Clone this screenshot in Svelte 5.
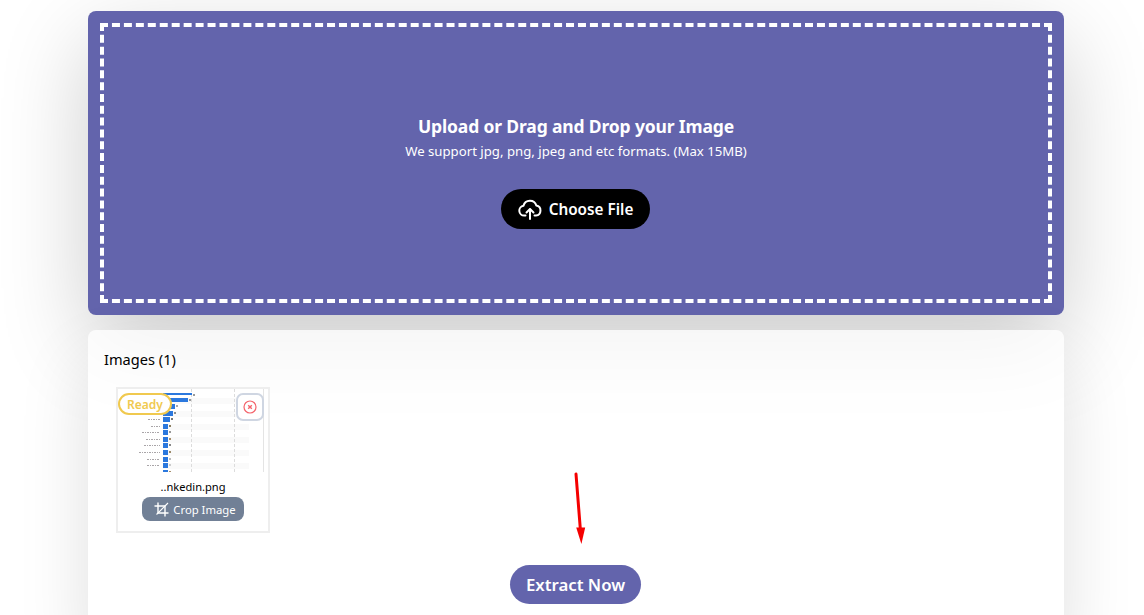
<script lang="ts">
  // thumbnail rows: bar end x, label width, band
  const rows = [
    { y: 393, end: 192, label: 0, band: false, h: 2, tint: "#9a9a9a" },
    { y: 398, end: 188, label: 0, band: true, h: 4, tint: "#9a9a9a" },
    { y: 404, end: 175, label: 0, band: false, h: 5, tint: "#a8a8a8" },
    { y: 411, end: 173, label: 0, band: true, h: 5, tint: "#8f8f8f" },
    { y: 417, end: 170, label: 12, band: false, h: 5, tint: "#777" },
    { y: 424, end: 168, label: 9, band: true, h: 5, tint: "#8b7d60" },
    { y: 430, end: 168, label: 18, band: false, h: 5, tint: "#999" },
    { y: 437, end: 168, label: 14, band: true, h: 5, tint: "#a58e6c" },
    { y: 443, end: 168, label: 16, band: false, h: 5, tint: "#888" },
    { y: 450, end: 168, label: 21, band: true, h: 5, tint: "#9c8a6a" },
    { y: 457, end: 168, label: 13, band: false, h: 5, tint: "#bbb" },
    { y: 463, end: 168, label: 13, band: true, h: 5, tint: "#ccc" },
    { y: 470, end: 168, label: 20, band: false, h: 2, tint: "#a58e6c" }
  ];
</script>

<main class="page">
  <section class="upload">
    <div class="dashed">
      <h2>Upload or Drag and Drop your Image</h2>
      <p>We support jpg, png, jpeg and etc formats. (Max 15MB)</p>
      <button class="choose">
        <svg width="24" height="24" viewBox="0 0 24 24" fill="none" stroke="#fff" stroke-width="2" stroke-linecap="round" stroke-linejoin="round">
          <path d="M7.5 18.5H6.2a4.9 4.9 0 0 1-.7-9.75A6.6 6.6 0 0 1 18.3 8.6a5 5 0 0 1-.3 9.9h-1.5" />
          <path d="M12 22v-9.5" />
          <path d="M8.5 15.5l3.5-3.5 3.5 3.5" />
        </svg>
        Choose File
      </button>
    </div>
  </section>

  <section class="images">
    <div class="heading">Images (1)</div>
    <div class="thumb">
      <div class="preview">
        <svg width="150" height="83" viewBox="118 389 150 83">
          {#each rows as r}
            {#if r.band}
              <rect x="163" y={r.y} width="86" height="6" fill="#fafafa" />
            {/if}
          {/each}
          <line x1="191.5" y1="389" x2="191.5" y2="472" stroke="#dcdcdc" stroke-dasharray="3 2" />
          <line x1="234.5" y1="389" x2="234.5" y2="472" stroke="#dcdcdc" stroke-dasharray="3 2" />
          <line x1="263.5" y1="389" x2="263.5" y2="472" stroke="#e4e4e4" />
          {#each rows as r}
            <rect x="163" y={r.y} width={r.end - 163} height={r.h} fill="#2b78de" />
            <rect x={r.end + 1} y={r.y + 1} width="2" height="2" fill={r.tint} />
            {#if r.label}
              <line x1={160 - r.label} y1={r.y + 2.5} x2="160" y2={r.y + 2.5} stroke="#a9a5a8" stroke-dasharray="2 1 1 1" />
            {/if}
          {/each}
        </svg>
        <span class="badge">Ready</span>
        <button class="remove" aria-label="Remove">
          <svg width="14" height="14" viewBox="0 0 14 14" fill="none" stroke="#f4636b" stroke-width="1.2">
            <circle cx="7" cy="7" r="6" />
            <path d="M5.2 5.2l3.6 3.6M8.8 5.2L5.2 8.8" stroke-width="1.4" />
          </svg>
        </button>
      </div>
      <div class="name">..nkedin.png</div>
      <button class="crop">
        <svg width="15" height="15" viewBox="0 0 15 15" fill="none" stroke="#fff" stroke-width="1.4">
          <path d="M4 0.5v10.5h10.5" />
          <path d="M0.5 4h10.5v10.5" />
          <path d="M14 1l-11.5 11.5" stroke-width="1.1" />
        </svg>
        Crop Image
      </button>
    </div>
    <div class="actions">
      <button class="extract">Extract Now</button>
    </div>
    <svg class="arrow" width="14" height="74" viewBox="0 0 14 74">
      <path d="M2 2l4.4 56" stroke="#f50000" stroke-width="3" stroke-linecap="round" fill="none" />
      <path d="M2.2 55.5h9L7.4 72z" fill="#f50000" />
    </svg>
  </section>
</main>

<style>
  :global(body) {
    margin: 0;
    background: #fff;
    overflow: hidden;
    height: 615px;
  }
  .page {
    width: 976px;
    margin-left: 88px;
    padding-top: 11px;
    font-family: "Noto Sans", "Open Sans", sans-serif;
    color: #000;
  }
  button {
    font-family: inherit;
    border: 0;
    cursor: pointer;
  }
  .upload {
    position: relative;
    height: 304px;
    box-sizing: border-box;
    padding: 12px;
    background: #6364ac;
    border-radius: 8px;
    box-shadow: 0 30px 90px rgba(0, 0, 0, 0.2);
  }
  .dashed {
    height: 100%;
    box-sizing: border-box;
    border: 4px dashed #fff;
    display: flex;
    flex-direction: column;
    align-items: center;
    color: #fff;
  }
  h2 {
    margin: 87px 0 0;
    font-size: 17.5px;
    line-height: 24px;
    font-weight: 700;
    letter-spacing: -0.15px;
  }
  p {
    margin: 3px 0 0;
    font-size: 13.2px;
    line-height: 20px;
  }
  .choose {
    margin: 28px 1px 0 0;
    width: 149px;
    height: 40px;
    border-radius: 20px;
    background: #000;
    color: #fff;
    font-size: 15.3px;
    font-weight: 600;
    display: flex;
    align-items: center;
    justify-content: center;
    gap: 7px;
    padding: 0;
  }
  .images {
    position: relative;
    margin-top: 15px;
    height: 300px;
    box-sizing: border-box;
    padding: 19px 16px 0;
    background: rgba(255, 255, 255, 0.75);
    border-radius: 8px;
    box-shadow: 0 35px 70px rgba(0, 0, 0, 0.13);
  }
  .heading {
    font-size: 14.6px;
    line-height: 20px;
  }
  .thumb {
    margin: 18px 0 0 12px;
    width: 154px;
    height: 146px;
    box-sizing: border-box;
    border: 2px solid #eee;
    background: #fff;
    display: flex;
    flex-direction: column;
    align-items: center;
  }
  .preview {
    position: relative;
    width: 150px;
    height: 83px;
    overflow: visible;
  }
  .preview > svg {
    display: block;
  }
  .badge {
    position: absolute;
    left: 0;
    top: 4px;
    width: 54px;
    height: 22px;
    box-sizing: border-box;
    border: 2px solid #f0c94f;
    border-radius: 11px;
    background: #fff;
    color: #f0c94f;
    font-size: 12px;
    font-weight: 600;
    line-height: 19px;
    text-align: center;
  }
  .remove {
    position: absolute;
    left: 118px;
    top: 4px;
    width: 28px;
    height: 28px;
    padding: 0;
    box-sizing: border-box;
    border: 2px solid #cfd6e2;
    border-radius: 7px;
    background: #fff;
    display: flex;
    align-items: center;
    justify-content: center;
  }
  .name {
    margin-top: 6px;
    font-size: 11.1px;
    line-height: 17px;
  }
  .crop {
    margin-top: 2px;
    width: 102px;
    height: 24px;
    border-radius: 8px;
    background: #718096;
    color: #fff;
    font-size: 11.3px;
    display: flex;
    align-items: center;
    justify-content: center;
    gap: 4px;
    padding: 0 0 0 4px;
  }
  .actions {
    display: flex;
    justify-content: center;
    margin-top: 32px;
  }
  .extract {
    margin-right: 1px;
    width: 131px;
    height: 39px;
    border-radius: 20px;
    background: #6364ac;
    color: #fff;
    font-size: 16.8px;
    font-weight: 600;
    padding: 0;
  }
  .arrow {
    position: absolute;
    left: 486px;
    top: 142px;
  }
</style>
